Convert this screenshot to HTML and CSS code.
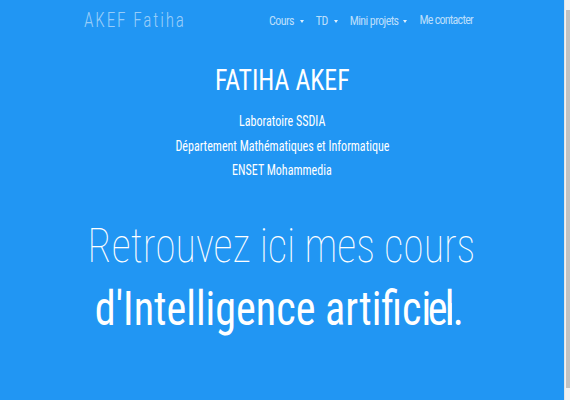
FILE: index.html
```html
<!DOCTYPE html>
<html lang="fr">
<head>
<meta charset="utf-8">
<title>AKEF Fatiha</title>
<link rel="stylesheet" href="styles.css">
</head>
<body>
<div class="page">
  <header class="navbar">
    <div class="container nav-inner">
      <a class="brand" href="#">AKEF Fatiha</a>
      <nav class="menu">
        <a class="menu-item" href="#">Cours<span class="caret"></span></a>
        <a class="menu-item close" href="#">TD<span class="caret"></span></a>
        <a class="menu-item tight close" href="#">Mini projets<span class="caret"></span></a>
        <a class="menu-item raised" href="#">Me contacter</a>
      </nav>
    </div>
  </header>
  <main class="hero">
    <h1 class="name"><span class="squeeze">FATIHA AKEF</span></h1>
    <p class="info"><span class="squeeze">Laboratoire SSDIA</span></p>
    <p class="info"><span class="squeeze">Département Mathématiques et Informatique</span></p>
    <p class="info"><span class="squeeze">ENSET Mohammedia</span></p>
    <div class="tagline">
      <p class="line light"><span class="squeeze">Retrouvez ici mes cours</span></p>
      <p class="line strong"><span class="squeeze">d'Intelligence artifici<span class="typed">el<span class="cursor"></span>.</span></span></p>
    </div>
  </main>
</div>
<div class="scrollbar"><div class="thumb"></div></div>
</body>
</html>
```
FILE: styles.css
```css
html {
  background: #2196f3;
}
body {
  margin: 0;
  background: #2196f3;
  color: #fff;
  font-family: Roboto, "Noto Sans", sans-serif;
  font-stretch: 75%;
  overflow: hidden;
  height: 400px;
}
.page {
  margin-right: 6px;
}
.scrollbar {
  position: fixed;
  top: 0;
  right: 0;
  width: 6px;
  height: 400px;
  background: #f1f1f1;
  border-left: 1px solid #e4e4e4;
  box-sizing: border-box;
}
.thumb {
  margin: 10px 0 0 1px;
  height: 378px;
  background: #c1c1c1;
}
.container {
  width: 396px;
  margin: 0 auto;
}
.nav-inner {
  display: flex;
  align-items: flex-start;
  justify-content: space-between;
  height: 40px;
}
.brand {
  display: inline-block;
  margin-top: 8px;
  font-size: 20px;
  font-weight: 300;
  letter-spacing: 2.2px;
  color: rgba(255, 255, 255, 0.55);
  text-decoration: none;
  transform: scaleX(0.86);
  transform-origin: left center;
}
.menu {
  display: flex;
  gap: 16px;
  margin-top: 14px;
  margin-right: 7px;
}
.menu-item {
  font-size: 12px;
  letter-spacing: -0.6px;
  color: rgba(255, 255, 255, 0.7);
  text-decoration: none;
  display: flex;
  align-items: center;
}
.menu-item.close {
  margin-left: -4px;
}
.menu-item.raised {
  margin-top: -2px;
  margin-left: -3px;
  letter-spacing: -0.75px;
}
.caret {
  display: inline-block;
  margin-left: 6px;
  border-left: 2px solid transparent;
  border-right: 2px solid transparent;
  border-top: 3px solid rgba(255, 255, 255, 0.85);
}
.tight .caret {
  margin-left: 4px;
}
.hero {
  text-align: center;
  padding-top: 22px;
}
.squeeze {
  display: inline-block;
  transform: scaleX(0.86);
}
.name {
  margin: 0 0 11px;
  font-size: 30px;
  font-weight: 400;
  line-height: 36px;
}
.info {
  margin: 0;
  font-size: 14px;
  line-height: 24.5px;
}
.tagline {
  margin-top: 31px;
}
.line {
  margin: 0;
  font-size: 49px;
  line-height: 63px;
}
.light {
  font-weight: 100;
}
.strong {
  font-weight: 400;
  padding-right: 7px;
}
.typed {
  margin-left: -4px;
  letter-spacing: -3px;
}
.cursor {
  display: inline-block;
  width: 2px;
  height: 22px;
  margin: 0 1px 0 -2px;
  vertical-align: baseline;
  background: #fff;
}
```
